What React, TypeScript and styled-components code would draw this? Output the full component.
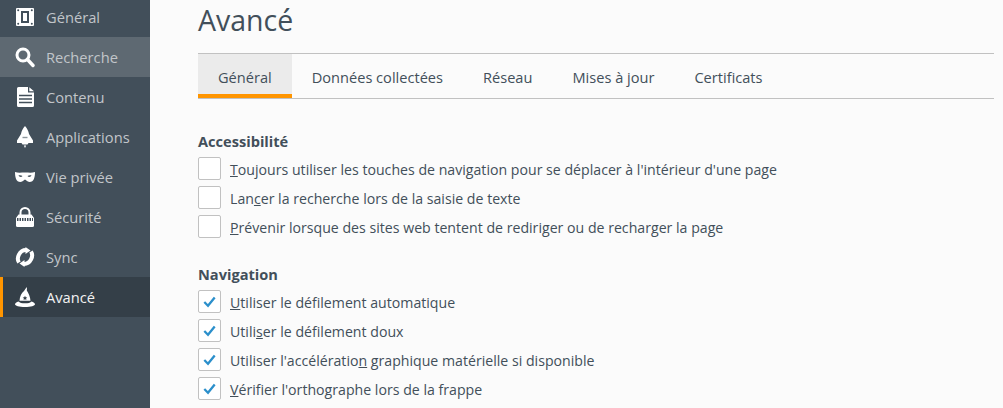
import { createGlobalStyle } from "styled-components";
import styled from "styled-components";

const GlobalStyle = createGlobalStyle`
  html, body {
    margin: 0;
    height: 100%;
    overflow: hidden;
    background: #fbfbfb;
    font-family: "Open Sans", "Noto Sans", sans-serif;
  }
  #root { height: 100%; }
`;

function GeneralIcon() {
  return (
    <svg width="18" height="18" viewBox="0 0 18 18">
      <path fillRule="evenodd" fill="#fff" d="M1 0h16a1 1 0 0 1 1 1v16a1 1 0 0 1-1 1H1a1 1 0 0 1-1-1V1a1 1 0 0 1 1-1zM5 3v12h8V3zM7 5h4v8H7z" />
      <circle cx="2.200" cy="2.200" r="1" fill="#424f5a" />
      <circle cx="15.800" cy="2.200" r="1" fill="#424f5a" />
      <circle cx="2.200" cy="15.800" r="1" fill="#424f5a" />
      <circle cx="15.800" cy="15.800" r="1" fill="#424f5a" />
    </svg>
  );
}

function SearchIcon() {
  return (
    <svg width="20" height="21" viewBox="0 0 20 21">
      <circle cx="8" cy="8" r="6" fill="none" stroke="#fff" strokeWidth="3" />
      <path d="M12.500 12.500L18 18.500" stroke="#fff" strokeWidth="3.400" strokeLinecap="round" />
    </svg>
  );
}

function ContentIcon() {
  return (
    <svg width="17" height="20" viewBox="0 0 17 20">
      <path fill="#fff" d="M1.500 0H11v5.500h6V18.500a1.500 1.500 0 0 1-1.500 1.500h-14A1.500 1.500 0 0 1 0 18.500v-17A1.500 1.500 0 0 1 1.500 0zM12.300 0.300L17 4.200h-4.700z" />
      <path d="M2 8.500h13M2 12h13M2 15.500h13" stroke="#424f5a" strokeWidth="1.500" />
    </svg>
  );
}

function RocketIcon() {
  return (
    <svg width="18" height="22" viewBox="0 0 18 22">
      <path fill="#fff" d="M9 0c2 2 3.500 5 4 8l4 6.500V17h-4.500l-1 1.500h-5L5.500 17H1v-2.500L5 8c.5-3 2-6 4-8z" />
      <path d="M6.500 11.500h5" stroke="#8b949b" strokeWidth="1.400" />
      <path fill="#fff" d="M7.800 19.500h2.400L9 22z" />
    </svg>
  );
}

function MaskIcon() {
  return (
    <svg width="20" height="12" viewBox="0 0 20 12">
      <path fill="#fff" fillRule="evenodd" d="M0 1c3 1 6 .5 10 .5S17 2 20 1c0 5-1 10-5.500 10C12 11 11 8.500 10 8.500S8 11 5.500 11C1 11 0 6 0 1zM3.500 4.500c.5 1.500 3 2 4 .5-1-.8-3-1-4-.5zm13 0c-1-.5-3-.3-4 .5 1 1.500 3.500 1 4-.5z" />
    </svg>
  );
}

function LockIcon() {
  return (
    <svg width="18" height="20" viewBox="0 0 18 20">
      <path d="M4.500 8V5.500a4.500 4.500 0 0 1 9 0V8" fill="none" stroke="#fff" strokeWidth="2" />
      <path fill="#fff" d="M2.500 7.500h13L18 11v7.500a1.500 1.500 0 0 1-1.500 1.500h-15A1.500 1.500 0 0 1 0 18.500V11z" />
      <path d="M1 12.500h16" stroke="#424f5a" strokeWidth="3" strokeDasharray="1.500 1" />
    </svg>
  );
}

function SyncIcon() {
  return (
    <svg width="20" height="20" viewBox="0 0 20 20">
      <path d="M4 15.500C1 11 4.500 3 11 3" fill="none" stroke="#fff" strokeWidth="4" />
      <path d="M16 4.500C19 9 15.500 17 9 17" fill="none" stroke="#fff" strokeWidth="4" />
      <path fill="#fff" d="M10.500 0v7l5-3.500zM9.500 20v-7l-5 3.500z" />
    </svg>
  );
}

function WizardIcon() {
  return (
    <svg width="20" height="20" viewBox="0 0 20 20">
      <path fill="#fff" fillRule="evenodd" d="M12 0l-.2 3.500c1.800 3 3.500 6.500 3.700 10.200H4.500C4.700 9.500 6.500 6 9 4c1-1.500 2-3 3-4zM10 8.800l-.7 1.500-1.600.2 1.200 1.100-.3 1.500 1.400-.8 1.400.8-.3-1.500 1.200-1.100-1.600-.2z" />
      <path fill="#fff" d="M3.500 14.500c1 1.300 3.500 1.800 6.500 1.800s5.500-.5 6.500-1.800c2 .6 3.500 1.600 3.500 2.700 0 1.600-4 2.800-10 2.800S0 18.800 0 17.200c0-1.100 1.500-2.100 3.500-2.700z" />
    </svg>
  );
}

function CheckIcon() {
  return (
    <svg width="13" height="12" viewBox="0 0 13 12">
      <path d="M1.300 6L5 9.700 11.700 1.500" fill="none" stroke="#2b8fcb" strokeWidth="2.300" />
    </svg>
  );
}

const navItems = [
  { label: "Général", icon: <GeneralIcon /> },
  { label: "Recherche", icon: <SearchIcon />, hovered: true },
  { label: "Contenu", icon: <ContentIcon /> },
  { label: "Applications", icon: <RocketIcon /> },
  { label: "Vie privée", icon: <MaskIcon /> },
  { label: "Sécurité", icon: <LockIcon /> },
  { label: "Sync", icon: <SyncIcon /> },
  { label: "Avancé", icon: <WizardIcon />, selected: true },
];

const tabs = ["Général", "Données collectées", "Réseau", "Mises à jour", "Certificats"];

// the key letter of each label is underlined, as in the Firefox preferences
const accessibility = [
  { before: "", key: "T", after: "oujours utiliser les touches de navigation pour se déplacer à l'intérieur d'une page" },
  { before: "Lan", key: "c", after: "er la recherche lors de la saisie de texte" },
  { before: "", key: "P", after: "révenir lorsque des sites web tentent de rediriger ou de recharger la page" },
];

const navigation = [
  { before: "", key: "U", after: "tiliser le défilement automatique" },
  { before: "Utili", key: "s", after: "er le défilement doux" },
  { before: "Utiliser l'accélératio", key: "n", after: " graphique matérielle si disponible" },
  { before: "", key: "V", after: "érifier l'orthographe lors de la frappe" },
];

export default function App() {
  return (
    <Page>
      <GlobalStyle />
      <Sidebar>
        {navItems.map((item) => (
          <NavItem key={item.label} $hovered={item.hovered} $selected={item.selected}>
            <NavIcon>{item.icon}</NavIcon>
            {item.label}
          </NavItem>
        ))}
      </Sidebar>
      <Main>
        <Title>Avancé</Title>
        <Tabs>
          {tabs.map((tab, i) => (
            <Tab key={tab} $active={i === 0}>{tab}</Tab>
          ))}
        </Tabs>
        <SectionTitle>Accessibilité</SectionTitle>
        <Options>
          {accessibility.map((o) => (
            <Option key={o.after}>
              <Box />
              <OptionLabel>{o.before}<u>{o.key}</u>{o.after}</OptionLabel>
            </Option>
          ))}
        </Options>
        <SectionTitle>Navigation</SectionTitle>
        <Options>
          {navigation.map((o) => (
            <Option key={o.after}>
              <Box><CheckIcon /></Box>
              <OptionLabel>{o.before}<u>{o.key}</u>{o.after}</OptionLabel>
            </Option>
          ))}
        </Options>
      </Main>
    </Page>
  );
}

const Page = styled.div`
  display: flex;
  height: 100%;
  overflow: hidden;
`;

const Sidebar = styled.nav`
  width: 150px;
  flex-shrink: 0;
  background: #424f5a;
  height: 100%;
  & > :first-child {
    margin-top: -3px;
  }
`;

const NavItem = styled.div<{ $hovered?: boolean; $selected?: boolean }>`
  height: 40px;
  box-sizing: border-box;
  display: flex;
  align-items: center;
  font-size: 14.7px;
  color: ${(p) => (p.$selected ? "#f2f2f2" : "#c1c5c9")};
  background: ${(p) => (p.$selected ? "#343f48" : p.$hovered ? "#5e6972" : "transparent")};
  border-left: 3px solid ${(p) => (p.$selected ? "#ff9500" : "transparent")};
`;

const NavIcon = styled.span`
  width: 20px;
  margin: 0 11px 0 12px;
  display: flex;
  align-items: center;
  justify-content: center;
`;

const Main = styled.main`
  flex: 1;
  padding: 0 9px 0 48px;
  color: #424f5a;
  min-width: 0;
`;

const Title = styled.h1`
  margin: 0;
  height: 53px;
  font-size: 28.5px;
  font-weight: 400;
  line-height: 41px;
`;

const Tabs = styled.div`
  display: flex;
  box-sizing: border-box;
  border-top: 1px solid #c1c1c1;
  border-bottom: 1px solid #c1c1c1;
  height: 46px;
  margin-bottom: 32px;
`;

const Tab = styled.div<{ $active?: boolean }>`
  padding: 0 20px;
  font-size: 14.6px;
  line-height: 46px;
  height: 44px;
  box-sizing: border-box;
  background: ${(p) => (p.$active ? "#ebebeb" : "transparent")};
  border-bottom: ${(p) => (p.$active ? "4px solid #ff9500" : "none")};
`;

const SectionTitle = styled.h2`
  margin: 0;
  font-size: 14.6px;
  font-weight: 700;
  line-height: 20px;
`;

const Options = styled.div`
  display: flex;
  flex-direction: column;
  gap: 6px;
  margin: 6px 0 26px;
`;

const Option = styled.label`
  display: flex;
  align-items: center;
  gap: 9px;
  font-size: 14.15px;
  height: 23px;
`;

const OptionLabel = styled.span`
  padding-top: 2px;
`;

const Box = styled.span`
  width: 23px;
  height: 23px;
  box-sizing: border-box;
  border: 1px solid #c1c1c1;
  border-radius: 2px;
  background: #fff;
  display: flex;
  align-items: center;
  justify-content: center;
`;
